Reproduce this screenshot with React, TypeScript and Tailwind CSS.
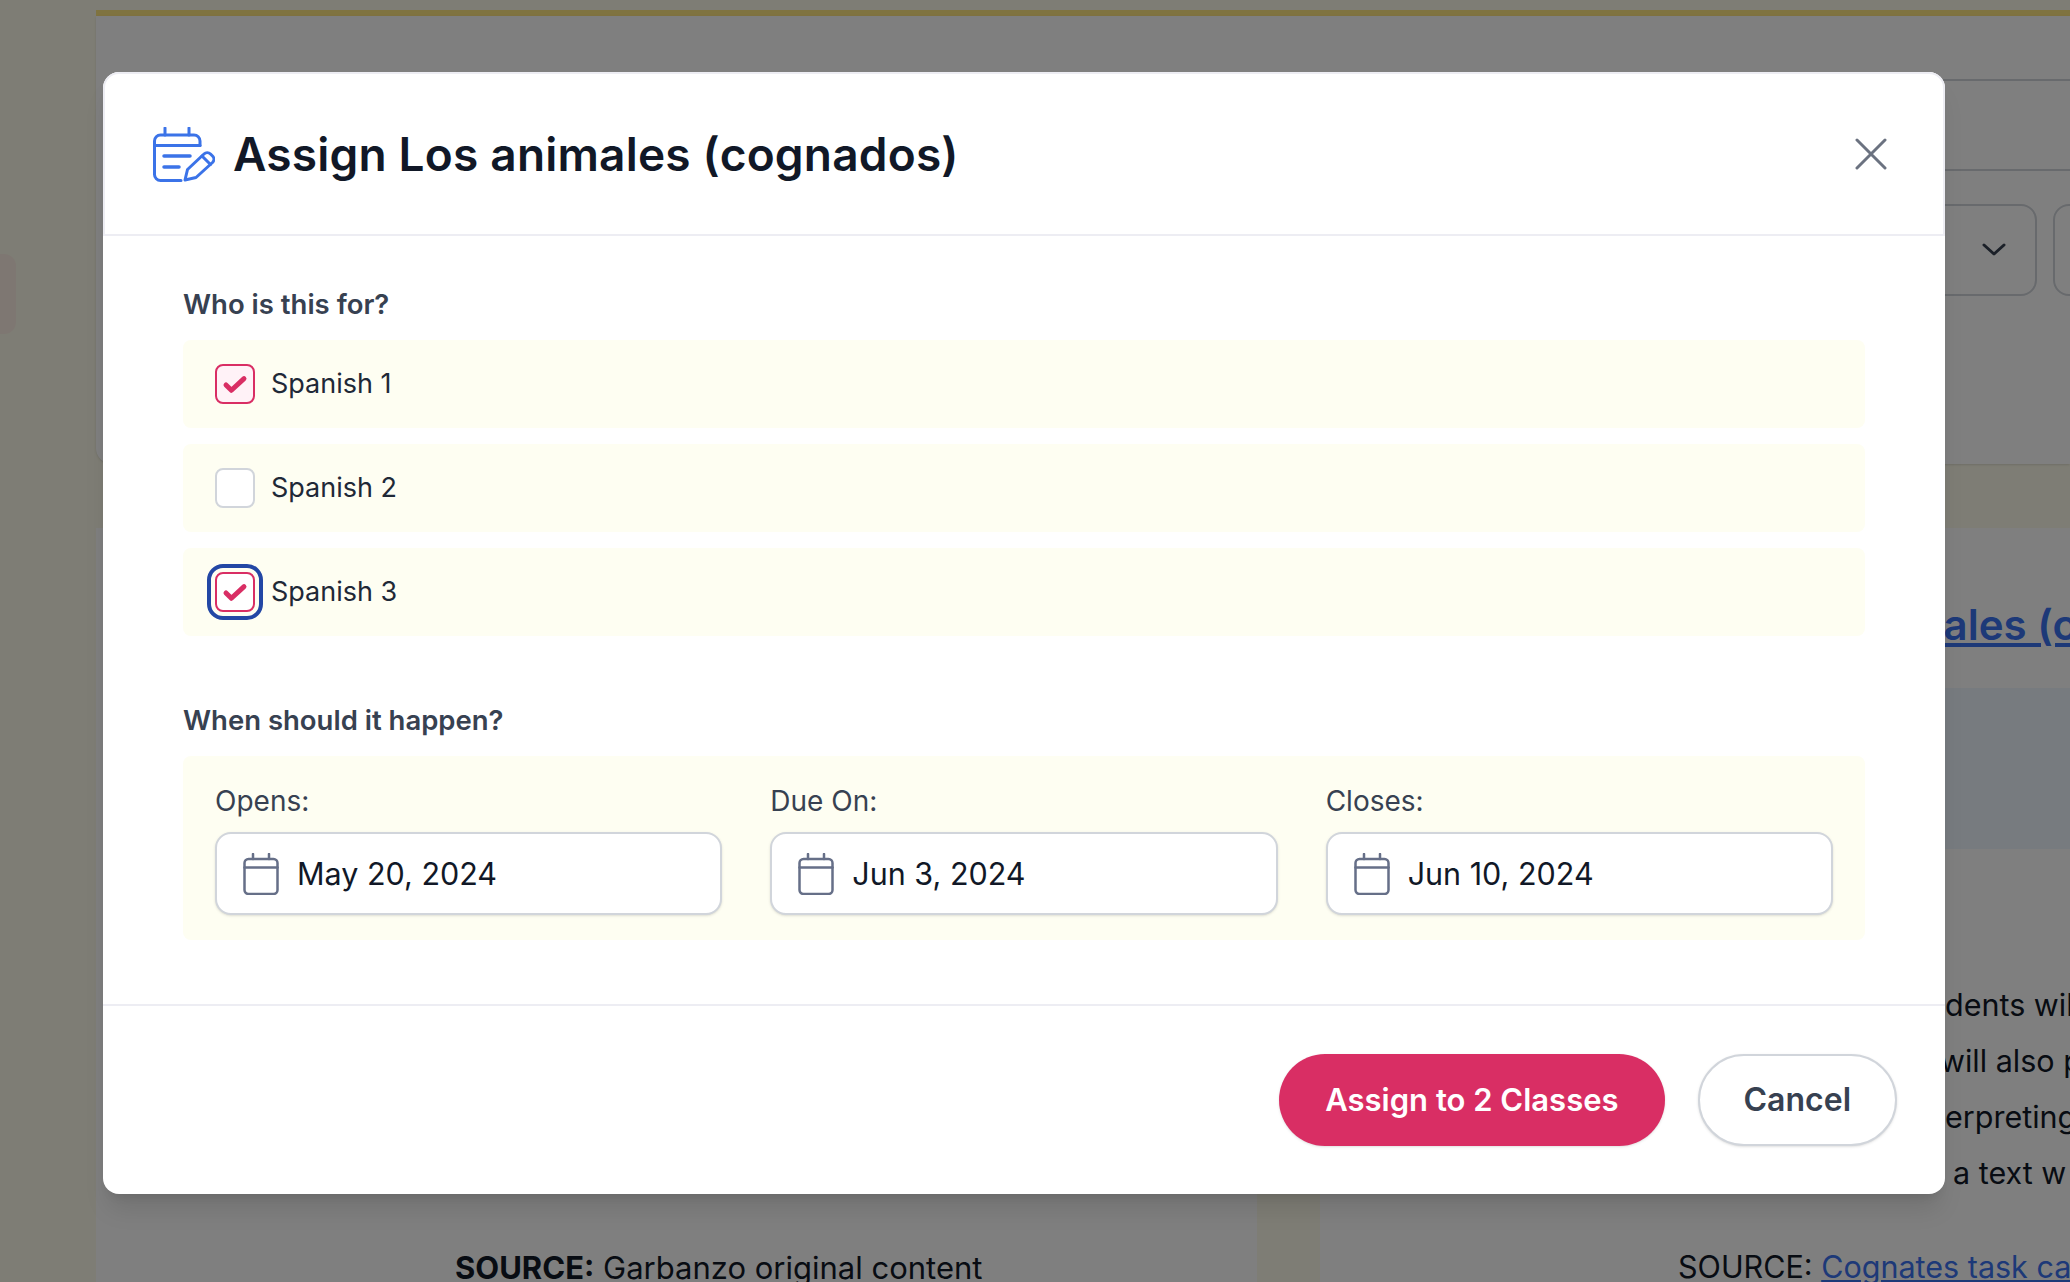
import React from 'react';

const font = "font-['Inter','Liberation_Sans',sans-serif]";

const CheckIcon = () => (
  <svg viewBox="0 0 40 40" className="w-full h-full" fill="none">
    <path d="M10 21l6 6L30 14" stroke="#d92e64" strokeWidth="5.500" strokeLinecap="round" strokeLinejoin="round" />
  </svg>
);

const AssignIcon = () => (
  <svg viewBox="0 0 62 55" width="62" height="55" fill="none" stroke="#3b73e8" strokeWidth="3" strokeLinecap="round" strokeLinejoin="round">
    <path d="M28 53.5H7.5a6 6 0 0 1-6-6V14a6 6 0 0 1 6-6H41a6 6 0 0 1 6 6v4.5" />
    <path d="M1.5 18.5H47" />
    <path d="M12 1v7M36 1v7" />
    <path d="M11 29h26M11 40h15" strokeWidth="3.5" />
    <path d="M32 53l2.5-10.5L51 27a4.6 4.6 0 0 1 6.500 0l2 2a4.600 4.600 0 0 1 0 6.500L43 50.500z" />
    <path d="M49 29l8.500 8.500" />
  </svg>
);

const CalendarIcon = () => (
  <svg viewBox="0 0 36 42" width="36" height="42" fill="none" stroke="#666f88" strokeWidth="2.500" strokeLinecap="round">
    <rect x="1.500" y="6" width="33" height="35" rx="4" />
    <path d="M1.500 14.500h33" />
    <path d="M10 1v5M26 1v5" />
  </svg>
);

const ClassRow = ({ label, state }: { label: string; state: 'on' | 'off' | 'focus' }) => (
  <div className="flex items-center h-[88px] rounded-lg bg-[#fefef2] pl-8">
    <div
      className={
        state === 'focus'
          ? 'w-10 h-10 rounded-lg border-2 border-[#d92e64] bg-white outline-4 outline-offset-4 outline-[#2347a5]'
          : state === 'on'
            ? 'w-10 h-10 rounded-lg border-2 border-[#d92e64] bg-[#fff2f7]'
            : 'w-10 h-10 rounded-lg border-2 border-[#d1d5db] bg-white'
      }
    >
      {state !== 'off' && <CheckIcon />}
    </div>
    <span className="ml-4 pt-[1px] text-[27px] text-[#1f2937]">{label}</span>
  </div>
);

const DateField = ({ label, value }: { label: string; value: string }) => (
  <div>
    <div className="text-[28px] leading-9 text-[#374151] mb-[13px]">{label}</div>
    <div className="flex items-center h-[83px] rounded-2xl border-2 border-[#d1d5db] bg-white shadow-sm pl-[26px]">
      <CalendarIcon />
      <span className="ml-[18px] text-[30.5px] text-[#111827]">{value}</span>
    </div>
  </div>
);

export default function App() {
  return (
    <div className={`relative h-[1282px] w-[2070px] overflow-hidden bg-[#fdfbea] ${font}`}>
      {/* page behind the dialog */}
      <div className="absolute left-0 top-[254px] w-4 h-[80px] rounded-r-xl bg-[#fdeee4]" />

      <div className="flex flex-col h-full pl-24 pt-[10px]">
        <div className="shrink-0 h-[6px] bg-[#ffe680]" />
        <div className="shrink-0 h-[448px] bg-white rounded-bl-2xl shadow">
          <div className="h-[65px] ml-[200px] border-b-2 border-[#d1d5db]" />
          <div className="h-[90px] ml-[200px] border-b-2 border-[#d1d5db]" />
          <div className="flex justify-end gap-4 pt-[33px] -mr-[60px]">
            <div className="flex items-center justify-end w-[300px] h-[92px] rounded-2xl border-2 border-[#d1d5db] pr-[29px]">
              <svg viewBox="0 0 24 14" width="24" height="14" fill="none" stroke="#374151" strokeWidth="3" strokeLinecap="round" strokeLinejoin="round">
                <path d="M2 2l10 9 10-9" />
              </svg>
            </div>
            <div className="w-[77px] h-[92px] rounded-2xl border-2 border-[#d1d5db]" />
          </div>
        </div>

        <div className="flex flex-1 min-h-0 gap-[63px] pt-[64px]">
          <div className="w-[1161px] flex flex-col justify-end items-start pl-[359px] bg-white">
            <p className="text-[31px] leading-[36px] text-[#111827] mb-[-4px] whitespace-nowrap">
              <b>SOURCE:</b> Garbanzo original content
            </p>
          </div>
          <div className="flex-1 bg-white text-[#111827] whitespace-nowrap text-[30.5px] leading-[56px] overflow-hidden">
            <div className="pt-[69px] pl-[442px] text-[42px] leading-[56px] font-semibold text-[#3a72f0] underline">Los animales (cognados)</div>
            <div className="mt-[35px] h-[161px] bg-[#eef6ff]" />
            <div className="mt-[128px] pl-[625px]">dents will</div>
            <div className="pl-[620px]">will also p</div>
            <div className="pl-[625px]">erpreting</div>
            <div className="pl-[633px]">a text w</div>
            <div className="mt-[38px] pl-[358px]">
              SOURCE: <span className="text-[#3a72f0] underline">Cognates task card</span>
            </div>
          </div>
        </div>
      </div>

      <div className="absolute inset-0 bg-black/50" />

      {/* dialog */}
      <div className="absolute left-[103px] top-[72px] w-[1842px] rounded-2xl bg-white shadow-xl">
        <div className="flex items-center justify-between h-[164px] rounded-t-2xl border-2 border-[#ededf3] pl-[48px] pr-[56px]">
          <div className="flex items-center gap-[18px]">
            <AssignIcon />
            <h2 className="text-[46px] tracking-[0.2px] font-semibold text-[#111827]">Assign Los animales (cognados)</h2>
          </div>
          <svg viewBox="0 0 32 32" width="32" height="32" fill="none" stroke="#6b7280" strokeWidth="3" strokeLinecap="round">
            <path d="M2 2l28 28M30 2L2 30" />
          </svg>
        </div>

        <div className="px-20 pt-[48px] pb-[64px]">
          <div className="text-[27.500px] leading-10 font-semibold text-[#374151] mb-4">Who is this for?</div>
          <div className="flex flex-col gap-4">
            <ClassRow label="Spanish 1" state="on" />
            <ClassRow label="Spanish 2" state="off" />
            <ClassRow label="Spanish 3" state="focus" />
          </div>

          <div className="text-[27.500px] leading-10 font-semibold text-[#374151] mt-16 mb-4">When should it happen?</div>
          <div className="grid grid-cols-3 gap-12 rounded-lg bg-[#fefef2] px-8 pt-[27px] pb-[25px]">
            <DateField label="Opens:" value="May 20, 2024" />
            <DateField label="Due On:" value="Jun 3, 2024" />
            <DateField label="Closes:" value="Jun 10, 2024" />
          </div>
        </div>

        <div className="flex justify-end gap-[33px] border-t-2 border-[#ededf3] pt-[48px] pb-12 pr-[48px]">
          <button className="h-[92px] rounded-full bg-[#d92e64] px-[46px] text-[31px] font-semibold text-white shadow-sm">
            Assign to 2 Classes
          </button>
          <button className="h-[92px] rounded-full border-2 border-[#d1d5db] bg-white px-[44px] text-[32px] font-semibold text-[#374151] shadow-sm">
            Cancel
          </button>
        </div>
      </div>
    </div>
  );
}
